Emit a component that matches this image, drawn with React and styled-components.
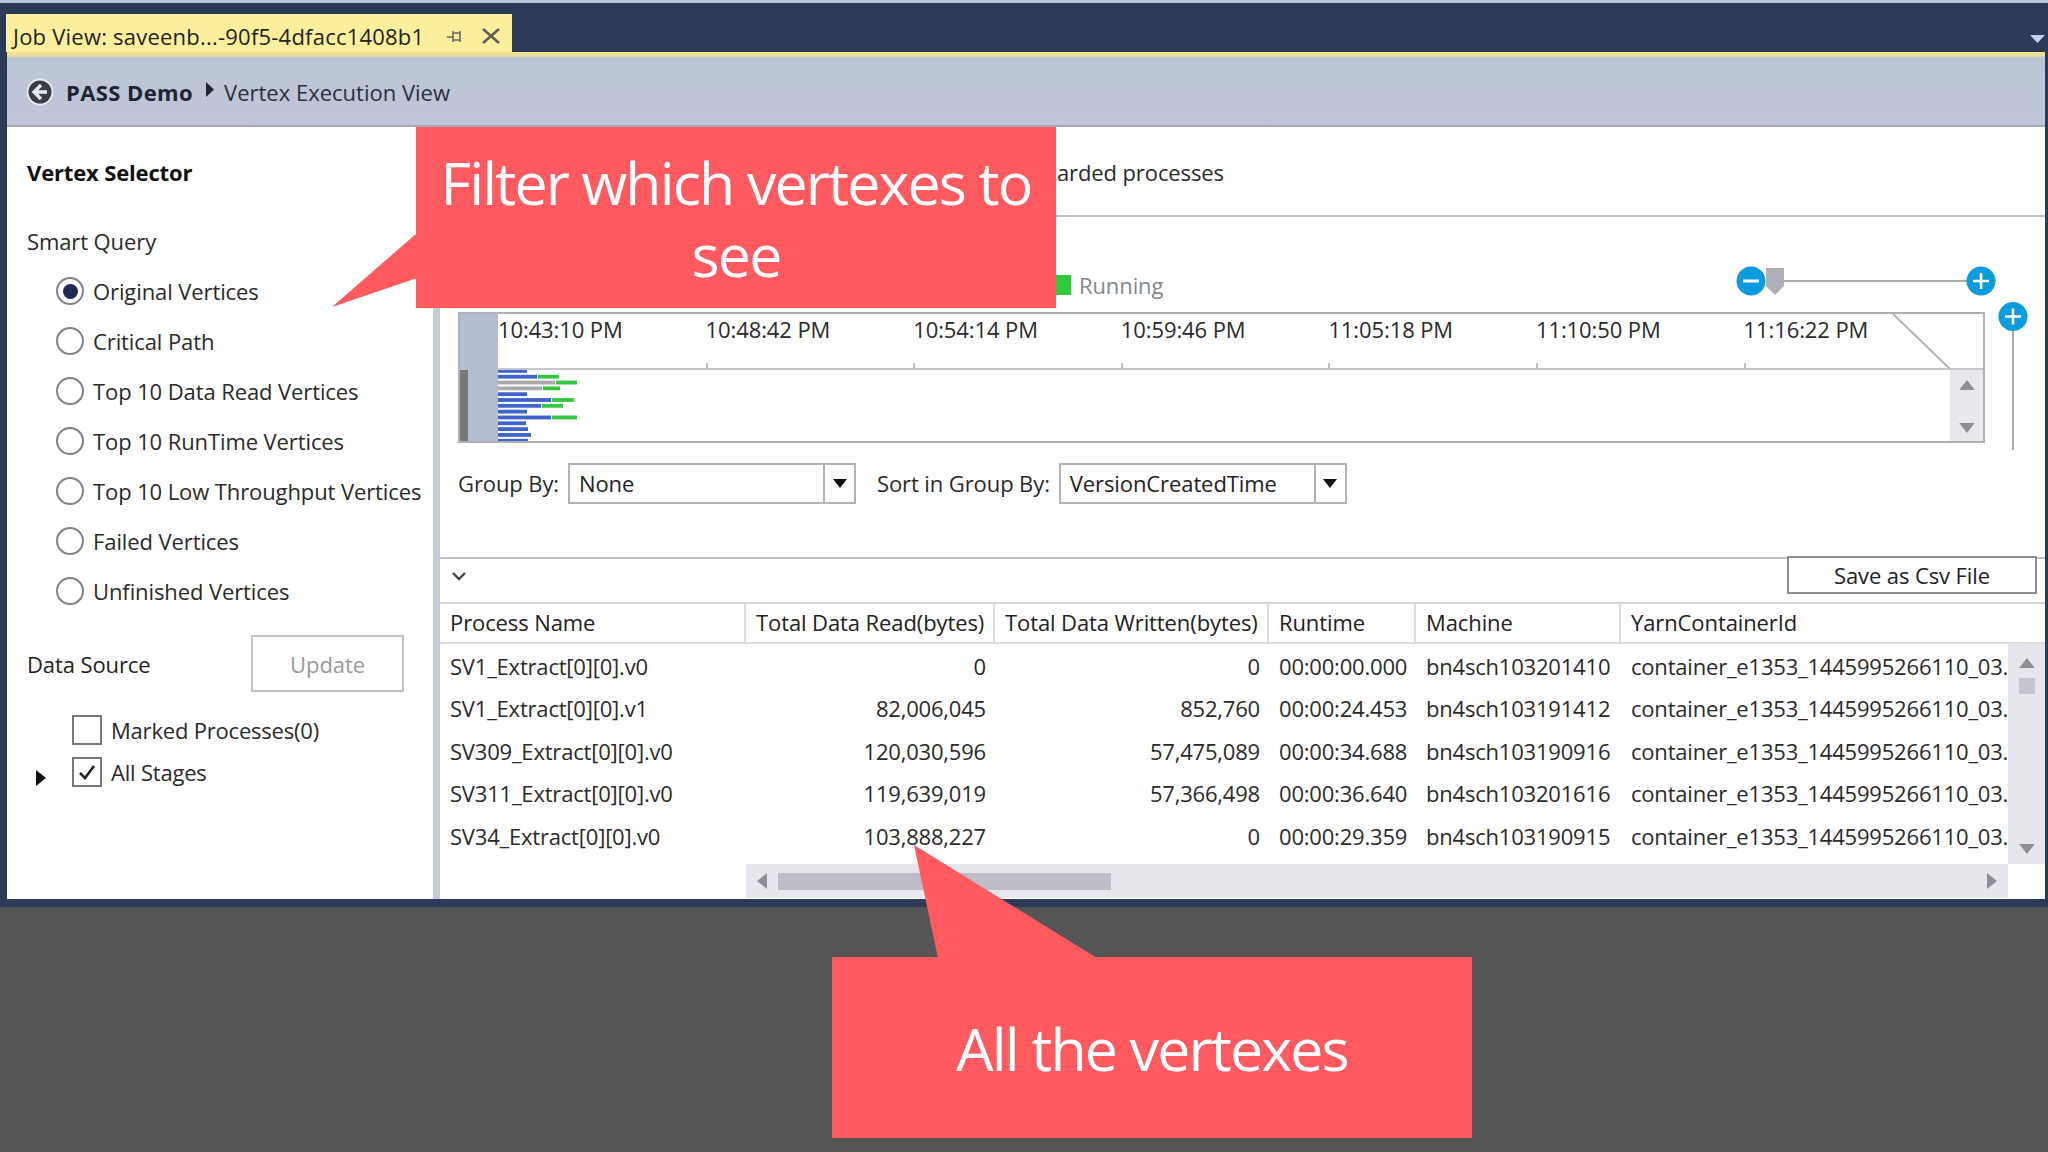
import React from "react";
import styled, { createGlobalStyle } from "styled-components";

const Global = createGlobalStyle`
  html, body { margin: 0; padding: 0; background: #555556; }
  * { box-sizing: border-box; }
`;

const font = `"Open Sans", "Noto Sans", "Liberation Sans", sans-serif`;
const COLS = "306px 249px 274px 147px 205px 387px";

const Screen = styled.div`
  position: relative;
  width: 2048px;
  height: 1152px;
  overflow: hidden;
  background: #555556;
  font-family: ${font};
  font-size: 22px;
  letter-spacing: -0.1px;
  color: #222;
`;
const Frame = styled.div`
  display: flex;
  flex-direction: column;
  height: 907px;
  background: #2c3a57;
  border-top: 3px solid #b9c4d8;
  padding: 0 3px 8px 7px;
`;
const TabBar = styled.div`
  position: relative;
  display: flex;
  align-items: flex-end;
  height: 49px;
  margin-left: -1px;
`;
const Tab = styled.div`
  display: flex;
  align-items: center;
  width: 506px;
  height: 38px;
  padding: 6px 12px 0 7px;
  background: #fbef9e;
  color: #222;
`;
const TabTitle = styled.span`
  flex: 1;
  white-space: nowrap;
  letter-spacing: 0.22px;
`;
const PinIcon = styled.svg`
  display: block;
`;
const CloseIcon = styled.svg`
  display: block;
  margin-left: 19px;
`;
const OverflowArrow = styled.svg`
  position: absolute;
  right: 0;
  bottom: 9px;
`;
const AccentLine = styled.div`
  height: 6px;
  background: linear-gradient(#f4e189, #e6d9a0 70%, #bac4dc);
`;
const Crumbs = styled.div`
  display: flex;
  align-items: center;
  height: 69px;
  padding: 0 0 0 19px;
  background: linear-gradient(#bac6d4, #c0c4da);
  border-bottom: 2px solid #a5a8b0;
`;
const BackIcon = styled.svg`
  display: block;
  margin-right: 12px;
`;
const CrumbRoot = styled.span`
  font-weight: 700;
  color: #1f2430;
  letter-spacing: 0.4px;
`;
const CrumbCaret = styled.svg`
  display: block;
  margin: 0 10px 4px 13px;
`;
const CrumbPage = styled.span`
  color: #2b2f38;
  letter-spacing: 0;
`;
const Body = styled.div`
  flex: 1;
  display: flex;
  min-height: 0;
  background: #fff;
`;
const Left = styled.aside`
  width: 426px;
  padding: 0 0 0 20px;
`;
const SelectorTitle = styled.div`
  font-weight: 700;
  line-height: 30px;
  margin-top: 30px;
  color: #111;
  letter-spacing: -0.15px;
`;
const SectionLabel = styled.div`
  line-height: 30px;
  margin-top: 39px;
  color: #2a2a2a;
`;
const RadioList = styled.div`
  display: flex;
  flex-direction: column;
  margin: 10px 0 0 29px;
`;
const RadioRow = styled.label`
  display: flex;
  align-items: center;
  gap: 9px;
  height: 50px;
  white-space: nowrap;
  color: #2a2a2a;
`;
const RadioMark = styled.span`
  display: flex;
  align-items: center;
  justify-content: center;
  width: 28px;
  height: 28px;
  border-radius: 50%;
  border: 2px solid #80808a;
  background: #fff;
  &::after {
    content: "";
    display: ${(p) => (p.$on ? "block" : "none")};
    width: 15px;
    height: 15px;
    border-radius: 50%;
    background: #1f2a52;
  }
`;
const SourceRow = styled.div`
  display: flex;
  align-items: center;
  justify-content: space-between;
  width: 377px;
  height: 57px;
  margin-top: 19px;
`;
const UpdateButton = styled.div`
  display: flex;
  align-items: center;
  justify-content: center;
  width: 153px;
  height: 57px;
  border: 2px solid #c2c2c6;
  color: #9a9a9c;
`;
const CheckList = styled.div`
  display: flex;
  flex-direction: column;
  gap: 12px;
  margin-top: 23px;
  letter-spacing: -0.2px;
`;
const CheckRow = styled.div`
  position: relative;
  display: flex;
  align-items: center;
  gap: 9px;
  height: 30px;
  padding-left: 45px;
  color: #2a2a2a;
  white-space: nowrap;
`;
const CheckBox = styled.span`
  display: flex;
  align-items: center;
  justify-content: center;
  width: 30px;
  height: 30px;
  border: 2px solid #77777d;
  background: #fff;
`;
const Expander = styled.svg`
  position: absolute;
  left: 9px;
  top: 13px;
`;
const Divider = styled.div`
  width: 7px;
  background: #c3c8dc;
`;
const Right = styled.main`
  flex: 1;
  display: flex;
  flex-direction: column;
  min-width: 0;
`;
const TabRow = styled.div`
  height: 90px;
  padding-right: 821px;
  border-bottom: 2px solid #c0c0c2;
  text-align: right;
  line-height: 90px;
  color: #2a2a2a;
  white-space: nowrap;
`;
const LegendRow = styled.div`
  display: flex;
  align-items: center;
  height: 85px;
  padding: 51px 47px 0 615px;
`;
const LegendSwatch = styled.span`
  width: 16px;
  height: 20px;
  background: #2ecb3c;
`;
const LegendText = styled.span`
  margin-left: 8px;
  color: #87878a;
`;
const Zoomer = styled.svg`
  display: block;
  margin: 0 0 3px auto;
`;
const TimelineRow = styled.div`
  display: flex;
  height: 150px;
  padding-left: 18px;
`;
const Timeline = styled.div`
  position: relative;
  display: flex;
  width: 1527px;
  height: 131px;
  margin-top: 10px;
  border: 2px solid #b0b0b4;
  background: #fff;
`;
const TimelineGutter = styled.div`
  display: flex;
  flex-direction: column;
  justify-content: flex-end;
  width: 38px;
  background: #b4bdd0;
`;
const GutterStrip = styled.div`
  width: 8px;
  height: 71px;
  background: #77777c;
`;
const TimelineMain = styled.div`
  flex: 1;
  display: flex;
  flex-direction: column;
  min-width: 0;
`;
const TimeAxis = styled.div`
  display: grid;
  grid-template-columns: repeat(7, 207.6px) 1fr;
  height: 56px;
  border-bottom: 2px solid #c8c8cc;
  line-height: 32px;
  white-space: nowrap;
  color: #2a2a2a;
`;
const TimeLabel = styled.div`
  position: relative;
  height: 54px;
  &::after {
    content: "";
    display: ${(p) => (p.$tick ? "block" : "none")};
    position: absolute;
    left: 0;
    bottom: 0;
    width: 2px;
    height: 5px;
    background: #c0c0c4;
  }
`;
const TimeText = styled.span`
  display: block;
  margin-top: -1px;
`;
const BarsRow = styled.div`
  flex: 1;
  display: flex;
  min-height: 0;
`;
const BarsArea = styled.div`
  flex: 1;
  overflow: hidden;
`;
const BarsChart = styled.svg`
  display: block;
`;
const MiniScroll = styled.div`
  display: flex;
  flex-direction: column;
  align-items: center;
  justify-content: space-between;
  width: 33px;
  padding: 10px 0 8px;
  background: #e8e8ec;
`;
const Corner = styled.svg`
  position: absolute;
  right: 31px;
  top: 0;
`;
const VerticalZoom = styled.svg`
  display: block;
  margin-left: 13px;
`;
const GroupRow = styled.div`
  display: flex;
  align-items: center;
  height: 42px;
  margin-top: 10px;
  padding-left: 18px;
  color: #2a2a2a;
`;
const GroupLabel = styled.span`
  margin-left: ${(p) => p.$ml || 0}px;
  margin-right: 9px;
  white-space: nowrap;
`;
const Combo = styled.div`
  display: flex;
  align-items: center;
  width: ${(p) => p.$w}px;
  height: 41px;
  border: 2px solid #b4b4b8;
  background: #fff;
`;
const ComboValue = styled.span`
  flex: 1;
  padding-left: 9px;
  color: #222;
  white-space: nowrap;
`;
const ComboButton = styled.span`
  display: flex;
  align-items: center;
  justify-content: center;
  width: 31px;
  height: 100%;
  border-left: 2px solid #b4b4b8;
`;
const DetailBar = styled.div`
  display: flex;
  align-items: center;
  justify-content: space-between;
  height: 45px;
  margin-top: 53px;
  padding: 0 8px 0 12px;
  border-top: 2px solid #c4c4c8;
`;
const Chevron = styled.svg`
  display: block;
  margin-bottom: 8px;
`;
const SaveButton = styled.div`
  display: flex;
  align-items: center;
  justify-content: center;
  width: 250px;
  height: 38px;
  margin-bottom: 12px;
  border: 2px solid #8e8e92;
  background: #fff;
  color: #222;
`;
const HeaderRow = styled.div`
  display: grid;
  grid-template-columns: ${COLS} 1fr;
  height: 42px;
  border-top: 2px solid #d4d4d8;
  border-bottom: 2px solid #dcdce0;
`;
const HeaderCell = styled.div`
  padding-left: 10px;
  line-height: 37px;
  border-right: ${(p) => (p.$plain ? "none" : "2px solid #dcdce0")};
  white-space: nowrap;
  overflow: hidden;
  color: #222;
`;
const TableBody = styled.div`
  display: flex;
  height: 220px;
`;
const Rows = styled.div`
  width: 1568px;
  padding-top: 1px;
  overflow: hidden;
`;
const DataRow = styled.div`
  display: grid;
  grid-template-columns: ${COLS};
  height: 42.4px;
  line-height: 42px;
  white-space: nowrap;
  letter-spacing: -0.2px;
`;
const Cell = styled.div`
  overflow: hidden;
  padding: ${(p) => (p.$right ? "0 9px 0 0" : "0 0 0 10px")};
  text-align: ${(p) => (p.$right ? "right" : "left")};
  color: #2a2a2a;
`;
const VScroll = styled.div`
  position: relative;
  flex: 1;
  background: #e6e7ec;
  display: flex;
  flex-direction: column;
  align-items: center;
  padding-top: 14px;
`;
const VThumb = styled.div`
  width: 16px;
  height: 16px;
  margin-top: 10px;
  background: #c4c5ce;
`;
const VDown = styled.svg`
  position: absolute;
  bottom: 10px;
`;
const HScrollRow = styled.div`
  display: flex;
  height: 34px;
`;
const HScroll = styled.div`
  display: flex;
  align-items: center;
  margin-left: 306px;
  width: 1262px;
  height: 100%;
  padding: 0 11px 0 11px;
  background: #e6e7ec;
`;
const HThumb = styled.div`
  width: 333px;
  height: 17px;
  margin-left: 11px;
  background: #bcbdc6;
`;
const HRight = styled.svg`
  display: block;
  margin-left: auto;
`;
const Callout = styled.div`
  position: absolute;
  left: ${(p) => p.$x}px;
  top: ${(p) => p.$y}px;
  width: ${(p) => p.$w}px;
  height: ${(p) => p.$h}px;
  display: flex;
  align-items: center;
  justify-content: center;
  padding: 0 10px;
  background: #ff5a5f;
  color: #fff;
  font-size: 59px;
  font-weight: 400;
  line-height: 72px;
  letter-spacing: -1.85px;
  text-align: center;
`;
const Tail = styled.svg`
  position: absolute;
  left: 0;
  top: 0;
  pointer-events: none;
`;

const Plus = ({ cx, cy }) => (
  <g>
    <circle cx={cx} cy={cy} r="14.5" fill="#0e9ade" />
    <path d={`M${cx - 8} ${cy}H${cx + 8}M${cx} ${cy - 8}V${cy + 8}`} stroke="#fff" strokeWidth="2.6" />
  </g>
);

const Down = ({ color = "#111", w = 14, h = 9 }) => (
  <svg width={w} height={h} viewBox="0 0 14 9" style={{ display: "block" }}>
    <path d="M0 0H14L7 9Z" fill={color} />
  </svg>
);
const Up = ({ color = "#8e8e96", w = 16, h = 10 }) => (
  <svg width={w} height={h} viewBox="0 0 14 9" style={{ display: "block" }}>
    <path d="M0 9H14L7 0Z" fill={color} />
  </svg>
);

const radios = [
  "Original Vertices",
  "Critical Path",
  "Top 10 Data Read Vertices",
  "Top 10 RunTime Vertices",
  "Top 10 Low Throughput Vertices",
  "Failed Vertices",
  "Unfinished Vertices",
];
const times = ["10:43:10 PM", "10:48:42 PM", "10:54:14 PM", "10:59:46 PM", "11:05:18 PM", "11:10:50 PM", "11:16:22 PM"];
const B = "#3f63cf";
const G = "#34c63c";
const S = "#a9a9ac";
const bars = [
  [B, 29, 0],
  [B, 39, 21],
  [S, 57, 21],
  [S, 44, 17],
  [B, 29, 0],
  [B, 53, 22],
  [B, 43, 21],
  [B, 29, 0],
  [B, 53, 25],
  [B, 28, 0],
  [B, 30, 0],
  [B, 33, 0],
  [B, 30, 0],
];
const rows = [
  ["SV1_Extract[0][0].v0", "0", "0", "00:00:00.000", "bn4sch103201410"],
  ["SV1_Extract[0][0].v1", "82,006,045", "852,760", "00:00:24.453", "bn4sch103191412"],
  ["SV309_Extract[0][0].v0", "120,030,596", "57,475,089", "00:00:34.688", "bn4sch103190916"],
  ["SV311_Extract[0][0].v0", "119,639,019", "57,366,498", "00:00:36.640", "bn4sch103201616"],
  ["SV34_Extract[0][0].v0", "103,888,227", "0", "00:00:29.359", "bn4sch103190915"],
];
const heads = ["Process Name", "Total Data Read(bytes)", "Total Data Written(bytes)", "Runtime", "Machine", "YarnContainerId"];

export default function App() {
  return (
    <Screen>
      <Global />
      <Frame>
        <TabBar>
          <Tab>
            <TabTitle>Job View: saveenb...-90f5-4dfacc1408b1</TabTitle>
            <PinIcon width="16" height="13" viewBox="0 0 16 13">
              <path d="M0 7H6M6 1V12M6 3H13V10H6M13 1V12" fill="none" stroke="#666" strokeWidth="1.6" />
            </PinIcon>
            <CloseIcon width="18" height="16" viewBox="0 0 18 16">
              <path d="M1 1L17 15M17 1L1 15" stroke="#5a5a50" strokeWidth="2.4" />
            </CloseIcon>
          </Tab>
          <OverflowArrow width="15" height="8" viewBox="0 0 15 8">
            <path d="M0 0H15L7.5 8Z" fill="#c5d0e6" />
          </OverflowArrow>
        </TabBar>
        <AccentLine />
        <Crumbs>
          <BackIcon width="28" height="28" viewBox="0 0 28 28">
            <circle cx="14" cy="14" r="13.5" fill="#e8eaf0" />
            <circle cx="14" cy="14" r="11.5" fill="#3a3d44" />
            <path d="M15 7L8 14L15 21M8 14H21" fill="none" stroke="#e8eaf0" strokeWidth="3.4" />
          </BackIcon>
          <CrumbRoot>PASS Demo</CrumbRoot>
          <CrumbCaret width="8" height="15" viewBox="0 0 8 15">
            <path d="M0 0L8 7.5L0 15Z" fill="#1f2430" />
          </CrumbCaret>
          <CrumbPage>Vertex Execution View</CrumbPage>
        </Crumbs>
        <Body>
          <Left>
            <SelectorTitle>Vertex Selector</SelectorTitle>
            <SectionLabel>Smart Query</SectionLabel>
            <RadioList>
              {radios.map((r, i) => (
                <RadioRow key={r}>
                  <RadioMark $on={i === 0} />
                  {r}
                </RadioRow>
              ))}
            </RadioList>
            <SourceRow>
              <span>Data Source</span>
              <UpdateButton>Update</UpdateButton>
            </SourceRow>
            <CheckList>
              <CheckRow>
                <CheckBox />
                Marked Processes(0)
              </CheckRow>
              <CheckRow>
                <Expander width="10" height="16" viewBox="0 0 10 16">
                  <path d="M0 0L10 8L0 16Z" fill="#111" />
                </Expander>
                <CheckBox>
                  <svg width="18" height="16" viewBox="0 0 18 16">
                    <path d="M2 9L7 14L16 2" fill="none" stroke="#222" strokeWidth="2.6" />
                  </svg>
                </CheckBox>
                All Stages
              </CheckRow>
            </CheckList>
          </Left>
          <Divider />
          <Right>
            <TabRow>Show discarded processes</TabRow>
            <LegendRow>
              <LegendSwatch />
              <LegendText>Running</LegendText>
              <Zoomer width="262" height="36" viewBox="0 0 262 36">
                <path d="M48 15H245" stroke="#aaa" strokeWidth="2" />
                <circle cx="15" cy="15" r="14.5" fill="#0e9ade" />
                <path d="M7 15H23" stroke="#fff" strokeWidth="3" />
                <path d="M30 2H48V20L39 29L30 20Z" fill="#b0b0b6" />
                <Plus cx={245} cy={15} />
              </Zoomer>
            </LegendRow>
            <TimelineRow>
              <Timeline>
                <TimelineGutter>
                  <GutterStrip />
                </TimelineGutter>
                <TimelineMain>
                  <TimeAxis>
                    {times.map((t, i) => (
                      <TimeLabel key={t} $tick={i > 0}>
                        <TimeText>{t}</TimeText>
                      </TimeLabel>
                    ))}
                  </TimeAxis>
                  <BarsRow>
                    <BarsArea>
                      <BarsChart width="100" height="73" viewBox="0 0 100 73">
                        {bars.map(([c, w, g], i) => (
                          <g key={i}>
                            <rect x="0" y={i * 5.82 - 1} width={w} height="3.8" fill={c} />
                            {g > 0 && <rect x={w + 1} y={i * 5.82 - 1} width={g} height="3.8" fill={G} />}
                          </g>
                        ))}
                      </BarsChart>
                    </BarsArea>
                    <MiniScroll>
                      <Up />
                      <Down color="#8e8e96" w={16} h={10} />
                    </MiniScroll>
                  </BarsRow>
                </TimelineMain>
                <Corner width="60" height="56" viewBox="0 0 60 56">
                  <path d="M1 0L58 55" stroke="#b4b4b8" strokeWidth="2" fill="none" />
                </Corner>
              </Timeline>
              <VerticalZoom width="30" height="150" viewBox="0 0 30 150">
                <path d="M15 20V148" stroke="#aaa" strokeWidth="2" />
                <Plus cx={15} cy={14.5} />
              </VerticalZoom>
            </TimelineRow>
            <GroupRow>
              <GroupLabel>Group By:</GroupLabel>
              <Combo $w={288}>
                <ComboValue>None</ComboValue>
                <ComboButton>
                  <Down />
                </ComboButton>
              </Combo>
              <GroupLabel $ml={21}>Sort in Group By:</GroupLabel>
              <Combo $w={288}>
                <ComboValue>VersionCreatedTime</ComboValue>
                <ComboButton>
                  <Down />
                </ComboButton>
              </Combo>
            </GroupRow>
            <DetailBar>
              <Chevron width="14" height="9" viewBox="0 0 14 9">
                <path d="M1 1L7 7L13 1" fill="none" stroke="#444" strokeWidth="2.4" />
              </Chevron>
              <SaveButton>Save as Csv File</SaveButton>
            </DetailBar>
            <HeaderRow>
              {heads.map((h, i) => (
                <HeaderCell key={h} $plain={i === 5}>{h}</HeaderCell>
              ))}
            </HeaderRow>
            <TableBody>
              <Rows>
                {rows.map((r) => (
                  <DataRow key={r[0]}>
                    <Cell>{r[0]}</Cell>
                    <Cell $right>{r[1]}</Cell>
                    <Cell $right>{r[2]}</Cell>
                    <Cell>{r[3]}</Cell>
                    <Cell>{r[4]}</Cell>
                    <Cell>container_e1353_1445995266110_03.</Cell>
                  </DataRow>
                ))}
              </Rows>
              <VScroll>
                <Up w={18} h={10} />
                <VThumb />
                <VDown width="18" height="10" viewBox="0 0 14 9">
                  <path d="M0 0H14L7 9Z" fill="#8e8e96" />
                </VDown>
              </VScroll>
            </TableBody>
            <HScrollRow>
              <HScroll>
                <svg width="10" height="16" viewBox="0 0 10 16" style={{ display: "block" }}>
                  <path d="M10 0L0 8L10 16Z" fill="#8e8e96" />
                </svg>
                <HThumb />
                <HRight width="10" height="16" viewBox="0 0 10 16">
                  <path d="M0 0L10 8L0 16Z" fill="#8e8e96" />
                </HRight>
              </HScroll>
            </HScrollRow>
          </Right>
        </Body>
      </Frame>
      <Tail width="2048" height="1152" viewBox="0 0 2048 1152">
        <path d="M332 307L417 233V278Z" fill="#ff5a5f" />
        <path d="M914 845L938 958H1097Z" fill="#ff5a5f" />
      </Tail>
      <Callout $x={416} $y={127} $w={640} $h={181}>Filter which vertexes to see</Callout>
      <Callout $x={832} $y={957} $w={640} $h={181}>All the vertexes</Callout>
    </Screen>
  );
}
